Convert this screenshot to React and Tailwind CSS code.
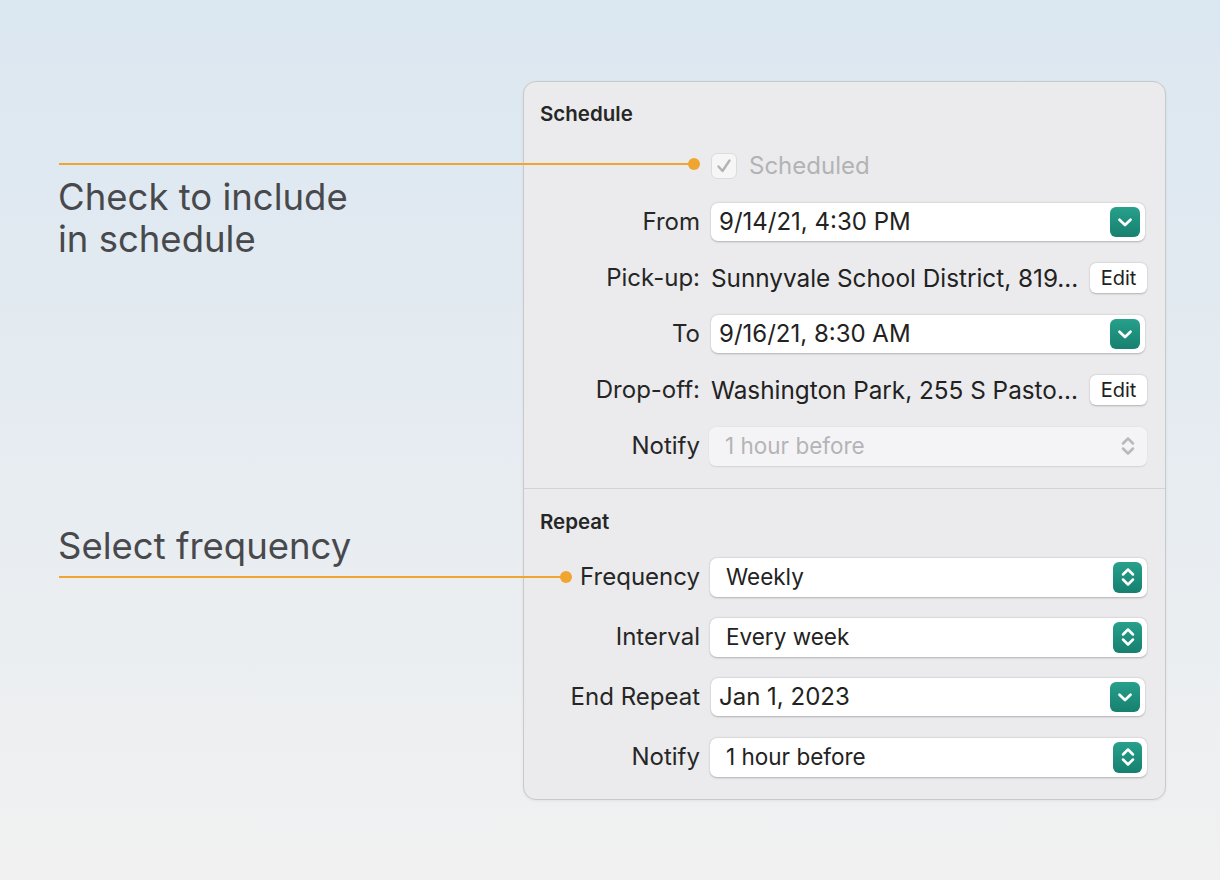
import React from 'react'

const FONT = { fontFamily: 'Inter, "Noto Sans", sans-serif' }

function ChevronDown() {
  return (
    <svg width="18" height="18" viewBox="0 0 18 18" fill="none">
      <path d="M3.5 6.8 L9 12 L14.5 6.8" stroke="white" strokeWidth="2.7" strokeLinecap="round" strokeLinejoin="round" />
    </svg>
  )
}

function UpDown({ color = 'white' }) {
  return (
    <svg width="18" height="26" viewBox="0 0 18 26" fill="none">
      <path d="M4 10.5 L9 5.5 L14 10.5" stroke={color} strokeWidth="2.5" strokeLinecap="round" strokeLinejoin="round" />
      <path d="M4 15.5 L9 20.5 L14 15.5" stroke={color} strokeWidth="2.5" strokeLinecap="round" strokeLinejoin="round" />
    </svg>
  )
}

function Row({ label, children, h = 'h-[56px]' }) {
  return (
    <div className={`flex items-center ${h}`}>
      <div className="w-[187px] shrink-0 pr-[11px] text-right text-[24px] text-[#262626]">{label}</div>
      <div className="flex-1 min-w-0">{children}</div>
    </div>
  )
}

function DateField({ value }) {
  return (
    <div className="flex h-[38px] items-center justify-between rounded-[7px] bg-white pl-[8px] pr-[5px] shadow-[0_0.5px_2px_rgba(0,0,0,0.25)]">
      <span className="text-[24px] text-[#222]">{value}</span>
      <div className="flex h-[30px] w-[30px] items-center justify-center rounded-[6px] bg-gradient-to-b from-[#27a08c] to-[#17806f]">
        <ChevronDown />
      </div>
    </div>
  )
}

function PopUp({ value, disabled }) {
  if (disabled) {
    return (
      <div className="flex h-[39px] items-center justify-between rounded-[7px] bg-[#f4f4f6] pl-[16px] pr-[10px] shadow-[0_0.5px_1.5px_rgba(0,0,0,0.1)]">
        <span className="text-[22.5px] text-[#b4b4b6]">{value}</span>
        <UpDown color="#b9b9bb" />
      </div>
    )
  }
  return (
    <div className="flex h-[39px] items-center justify-between rounded-[7px] bg-white pl-[16px] pr-[5px] shadow-[0_0.5px_2px_rgba(0,0,0,0.25)]">
      <span className="text-[22.5px] text-[#222]">{value}</span>
      <div className="flex h-[31px] w-[29px] items-center justify-center rounded-[6px] bg-gradient-to-b from-[#27a08c] to-[#17806f]">
        <UpDown />
      </div>
    </div>
  )
}

function AddressRow({ label, value }) {
  return (
    <Row label={label}>
      <div className="flex items-center justify-between pr-[18px]">
        <span className="truncate text-[24.3px] text-[#222]">{value}</span>
        <button className="ml-[8px] flex h-[30px] w-[57px] shrink-0 items-center justify-center rounded-[6px] bg-white text-[20px] text-[#222] shadow-[0_0.5px_2px_rgba(0,0,0,0.25)]">
          Edit
        </button>
      </div>
    </Row>
  )
}

export default function App() {
  return (
    <div
      className="relative h-[880px] w-[1220px] overflow-hidden bg-gradient-to-b from-[#dbe7f1] to-[#f1f1f1]"
      style={FONT}
    >
      {/* Annotations */}
      <div className="absolute left-[58px] top-[176px] text-[36.5px] leading-[42px] text-[#48494c]">
        Check to include
        <br />
        in schedule
      </div>
      <div className="absolute left-[58px] top-[525px] text-[36.5px] leading-[42px] text-[#48494c]">
        Select frequency
      </div>

      {/* Panel */}
      <div className="absolute left-[523px] top-[81px] w-[643px] rounded-[13px] border border-[#c9c9cc] bg-[#ebebed] pb-[12px] shadow-[0_1px_3px_rgba(0,0,0,0.06)]">
        <div className="px-[16px] pt-[18px] text-[20.5px] font-semibold leading-[28px] text-[#262626]">Schedule</div>
        <div className="mt-[10px] pr-[18px]">
          <Row label="">
            <div className="flex items-center gap-[12px]">
              <div className="flex h-[26px] w-[26px] items-center justify-center rounded-[6px] border border-[#dcdcde] bg-[#f6f6f7]">
                <svg width="20" height="20" viewBox="0 0 20 20" fill="none">
                  <path d="M4.5 10.5 L8.5 15 L15.5 4.5" stroke="#b3b3b5" strokeWidth="2.4" strokeLinecap="round" strokeLinejoin="round" />
                </svg>
              </div>
              <span className="text-[24px] text-[#b3b3b5]">Scheduled</span>
            </div>
          </Row>
          <Row label="From">
            <div className="pr-[2px]">
              <DateField value="9/14/21, 4:30 PM" />
            </div>
          </Row>
        </div>
        <AddressRow label="Pick-up:" value="Sunnyvale School District, 819..." />
        <div className="pr-[20px]">
          <Row label="To">
            <DateField value="9/16/21, 8:30 AM" />
          </Row>
        </div>
        <AddressRow label="Drop-off:" value="Washington Park, 255 S Pasto..." />
        <div className="pr-[18px]">
          <Row label="Notify">
            <div className="-ml-[2px]">
              <PopUp value="1 hour before" disabled />
            </div>
          </Row>
        </div>

        <div className="mt-[14px] border-t border-[#d3d3d6]" />

        <div className="px-[16px] pt-[19px] text-[20.5px] font-semibold leading-[28px] text-[#262626]">Repeat</div>
        <div className="mt-[11px] pr-[18px]">
          <Row label="Frequency" h="h-[60px]">
            <div className="-ml-[1px]">
              <PopUp value="Weekly" />
            </div>
          </Row>
          <Row label="Interval" h="h-[60px]">
            <div className="-ml-[1px]">
              <PopUp value="Every week" />
            </div>
          </Row>
          <Row label="End Repeat" h="h-[60px]">
            <div className="pr-[2px]">
              <DateField value="Jan 1, 2023" />
            </div>
          </Row>
          <Row label="Notify" h="h-[60px]">
            <div className="-ml-[1px]">
              <PopUp value="1 hour before" />
            </div>
          </Row>
        </div>
      </div>

      {/* Callout lines */}
      <div className="absolute left-[59px] top-[163px] h-[2px] w-[630px] bg-[#f0a531]" />
      <div className="absolute left-[688px] top-[158px] h-[12px] w-[12px] rounded-full bg-[#f0a531]" />
      <div className="absolute left-[59px] top-[576px] h-[2px] w-[502px] bg-[#f0a531]" />
      <div className="absolute left-[560px] top-[571px] h-[12px] w-[12px] rounded-full bg-[#f0a531]" />
    </div>
  )
}
